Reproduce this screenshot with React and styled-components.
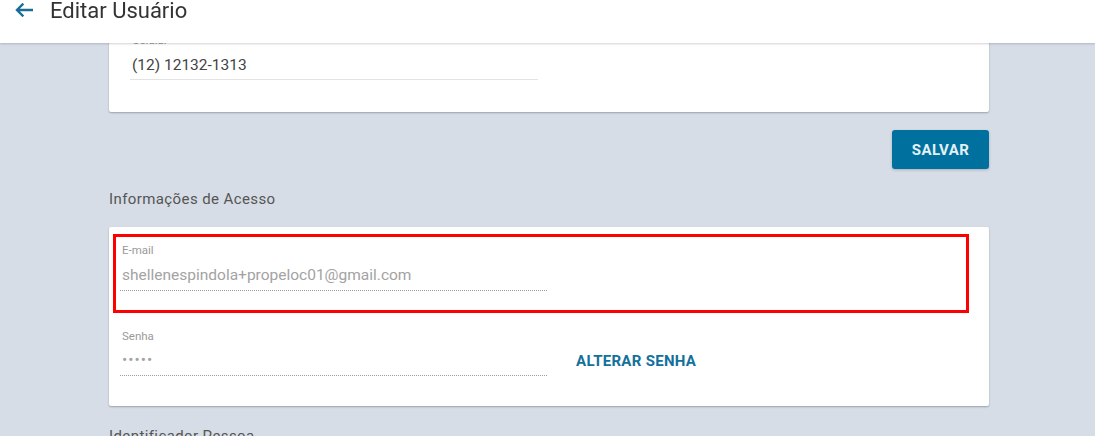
import React from "react"
import styled, { createGlobalStyle } from "styled-components"

const GlobalStyle = createGlobalStyle`
  html, body {
    margin: 0;
    padding: 0;
    height: 100%;
    overflow: hidden;
    background: #d6dde6;
    font-family: Roboto, "Liberation Sans", Arial, sans-serif;
  }
`

const TopBar = styled.header`
  position: fixed;
  top: 0;
  left: 0;
  right: 0;
  height: 43px;
  background: #ffffff;
  box-shadow: 0 1px 2px rgba(0, 0, 0, 0.18);
  display: flex;
  align-items: flex-start;
  z-index: 10;
`

const BackButton = styled.button`
  border: 0;
  background: none;
  padding: 0;
  margin: 3px 0 0 15px;
  width: 18px;
  height: 14px;
  display: flex;
  cursor: pointer;
`

const Title = styled.h1`
  margin: 0 0 0 17px;
  font-size: 22px;
  line-height: 21px;
  font-weight: 400;
  color: #333333;
`

const Page = styled.main`
  width: 880px;
  padding-left: 109px;
  margin-top: 17px;
  display: flex;
  flex-direction: column;
`

const Card = styled.section`
  position: relative;
  background: #ffffff;
  border-radius: 2px;
  box-shadow: 0 1px 2px rgba(0, 0, 0, 0.28);
  padding: ${(p) => p.$padding};
`

const Field = styled.div`
  width: ${(p) => p.$width}px;
  display: flex;
  flex-direction: column;
`

const Label = styled.label`
  padding-left: 2px;
  font-size: 11.5px;
  line-height: 13px;
  color: #9a9a9a;
`

const Value = styled.div`
  margin-top: ${(p) => (p.$secret ? 7 : 8)}px;
  padding-left: 2px;
  font-size: 15.5px;
  line-height: 20px;
  color: ${(p) => (p.$disabled ? "#a3a3a3" : "#444444")};
  padding-bottom: ${(p) => (p.$disabled ? 5 : 4)}px;
  border-bottom: 1px ${(p) => (p.$disabled ? "dotted #9c9c9c" : "solid #e2e2e2")};
  letter-spacing: ${(p) => (p.$secret ? "1px" : "0")};
`

const Actions = styled.div`
  display: flex;
  justify-content: flex-end;
  margin-top: 18px;
`

const PrimaryButton = styled.button`
  width: 97px;
  height: 39px;
  border: 0;
  border-radius: 3px;
  background: #00709e;
  color: #e3f0f6;
  font-family: inherit;
  font-size: 15px;
  font-weight: 700;
  letter-spacing: 0.4px;
  box-shadow: 0 1px 3px rgba(0, 0, 0, 0.2);
  cursor: pointer;
`

const SectionTitle = styled.h2`
  margin: 17px 0 15px;
  font-size: 15px;
  line-height: 26px;
  font-weight: 400;
  color: #555555;
  letter-spacing: 0.4px;
`

const Highlight = styled.div`
  position: absolute;
  left: 4px;
  top: 7px;
  width: 850px;
  height: 73px;
  border: 3px solid #ff0000;
  pointer-events: none;
`

const Row = styled.div`
  display: flex;
  align-items: center;
  margin-top: ${(p) => p.$top || 0}px;
`

const TextButton = styled.button`
  border: 0;
  background: none;
  padding: 0;
  margin: 16px 0 0 29px;
  color: #12709b;
  font-family: inherit;
  font-size: 15px;
  font-weight: 700;
  letter-spacing: 0.3px;
  cursor: pointer;
`

const ArrowIcon = () => (
  <svg width="18" height="14" viewBox="0 0 18 14">
    <path
      d="M17 7H2.5M7.5 1.5L2 7l5.5 5.5"
      fill="none"
      stroke="#1a6e96"
      strokeWidth="2.4"
      strokeLinecap="square"
    />
  </svg>
)

const App = () => {
  return (
    <>
      <GlobalStyle />
      <TopBar>
        <BackButton aria-label="Voltar">
          <ArrowIcon />
        </BackButton>
        <Title>Editar Usuário</Title>
      </TopBar>

      <Page>
        <Card $padding="17px 21px 32px">
          <Field $width={408}>
            <Label>Celular</Label>
            <Value>(12) 12132-1313</Value>
          </Field>
        </Card>

        <Actions>
          <PrimaryButton>SALVAR</PrimaryButton>
        </Actions>

        <SectionTitle>Informações de Acesso</SectionTitle>

        <Card $padding="17px 20px 30px 11px">
          <Highlight />
          <Field $width={427}>
            <Label>E-mail</Label>
            <Value $disabled>shellenespindola+propeloc01@gmail.com</Value>
          </Field>
          <Row $top={39}>
            <Field $width={427}>
              <Label>Senha</Label>
              <Value $disabled $secret>•••••</Value>
            </Field>
            <TextButton>ALTERAR SENHA</TextButton>
          </Row>
        </Card>

        <SectionTitle>Identificador Pessoa</SectionTitle>
      </Page>
    </>
  )
}

export default App
